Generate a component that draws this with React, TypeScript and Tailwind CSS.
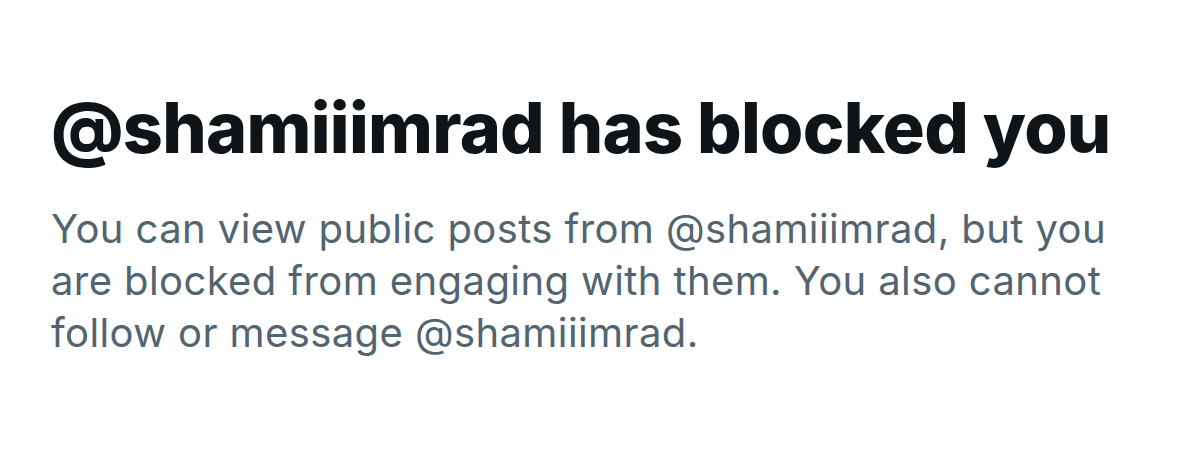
export default function App() {
  const handle = "@shamiiimrad"

  return (
    <div className="h-[470px] w-[1200px] bg-white font-['Inter','Liberation_Sans',sans-serif]">
      <div className="pl-[51px] pt-[88px]">
        <h1 className="text-[70px] leading-[80px] font-extrabold tracking-[-0.7px] text-[#0f1419]">
          {handle} has blocked you
        </h1>
        <p className="mt-[35px] text-[40px] leading-[52px] tracking-[0.4px] text-[#536471]">
          You can view public posts from {handle}, but you
          <br />
          are blocked from engaging with them. You also cannot
          <br />
          follow or message {handle}.
        </p>
      </div>
    </div>
  )
}
